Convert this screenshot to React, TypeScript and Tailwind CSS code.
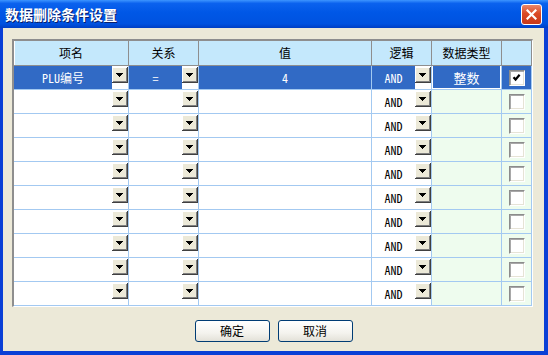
import React from "react";

const headers = ["项名", "关系", "值", "逻辑", "数据类型", ""];

type Row = {
  name: string;
  rel: string;
  val: string;
  logic: string;
  type: string;
  checked: boolean;
  selected: boolean;
};

const rows: Row[] = Array.from({ length: 10 }, (_, i) =>
  i === 0
    ? { name: "PLU编号", rel: "=", val: "4", logic: "AND", type: "整数", checked: true, selected: true }
    : { name: "", rel: "", val: "", logic: "AND", type: "", checked: false, selected: false }
);

const latin = "font-['Noto_Sans_Mono_CJK_SC','Liberation_Mono','Noto_Sans_CJK_SC',monospace]";

function DropButton() {
  return (
    <div className="w-[16px] h-[16px] flex items-center justify-center bg-[#ece9d8] border-r border-b border-[#404040] shadow-[inset_1px_1px_#ffffff,inset_-1px_-1px_#808080]">
      <svg width="7" height="4" viewBox="0 0 7 4">
        <path d="M0 0h7v1h-1v1h-1v1h-1v1h-1v-1h-1v-1h-1v-1h-1z" fill="#000" />
      </svg>
    </div>
  );
}

function ComboCell({ text, selected }: { text: string; selected: boolean }) {
  return (
    <div className="h-[24px] flex border-r border-b border-[#a3c9f1] bg-white">
      <div
        className={`flex-1 flex items-center justify-center text-[12px] ${latin} ${
          selected ? "bg-[#316ac5] text-white" : "text-black"
        }`}
      >
        {text}
      </div>
      <div className="w-[16px] pt-[1px]">
        <DropButton />
      </div>
    </div>
  );
}

function CheckBox({ checked }: { checked: boolean }) {
  return (
    <div className="w-[16px] h-[16px] flex items-center justify-center bg-white border border-t-[#8c8c8c] border-l-[#8c8c8c] border-b-white border-r-white shadow-[inset_1px_1px_#a8a8a8,inset_-1px_-1px_#e6e3d6]">
      {checked && (
        <svg width="9" height="9" viewBox="0 0 9 9">
          <polyline points="1.5,4.2 3.6,6.5 7.6,1.8" fill="none" stroke="#000" strokeWidth="2.2" />
        </svg>
      )}
    </div>
  );
}

export default function App() {
  return (
    <div className="w-[548px] h-[355px] flex flex-col bg-[#0a3fd6] font-['Noto_Sans_CJK_SC',sans-serif] select-none">
      <div className="h-[28px] flex items-center justify-between pl-[5px] pr-[6px] bg-[linear-gradient(to_bottom,#3d95ff_0%,#0b62ee_12%,#0057e6_45%,#0052e0_85%,#003fc4_100%)]">
        <span className="text-white font-bold text-[14px] leading-none [text-shadow:1px_1px_#0a1e6a]">
          数据删除条件设置
        </span>
        <div className="w-[21px] h-[21px] rounded-[3px] border border-white flex items-center justify-center bg-[linear-gradient(to_bottom,#e9876a_0%,#db4a26_45%,#c7381a_100%)]">
          <svg width="11" height="11" viewBox="0 0 11 11">
            <path d="M1.5 1.5L9.5 9.5M9.5 1.5L1.5 9.5" stroke="#fff" strokeWidth="2.2" strokeLinecap="square" />
          </svg>
        </div>
      </div>

      <div className="flex-1 ml-[3px] mr-[4px] mb-[4px] bg-[#ece9d8] pt-[11px] pl-[9px] flex flex-col">
        <div className="w-[521px] border-t-2 border-l-2 border-[#8e8e8e] border-r border-b border-r-white border-b-white">
          <div className="grid grid-cols-[115px_70px_173px_60px_70px_30px]">
            {headers.map((h, i) => (
              <div
                key={i}
                className={`h-[25px] bg-[#c4e8fc] border-r border-b border-[#8e8e8e] flex items-center justify-center text-[12px] text-black ${
                  i === 0 ? "shadow-[inset_1px_0_#ffffff]" : ""
                }`}
              >
                {h}
              </div>
            ))}

            {rows.map((r, i) => (
              <React.Fragment key={i}>
                <ComboCell text={r.name} selected={r.selected} />
                <ComboCell text={r.rel} selected={r.selected} />
                <div
                  className={`h-[24px] border-r border-b border-[#a3c9f1] flex items-center justify-center text-[12px] ${latin} ${
                    r.selected ? "bg-[#316ac5] text-white" : "bg-white"
                  }`}
                >
                  {r.val}
                </div>
                <ComboCell text={r.logic} selected={r.selected} />
                <div
                  className={`h-[24px] border-r border-b border-[#a3c9f1] flex items-center justify-center text-[13px] ${
                    r.selected
                      ? "bg-[#316ac5] text-white shadow-[inset_1px_0_#ffffff,inset_-1px_-1px_#ffffff]"
                      : "bg-[#eefcee]"
                  }`}
                >
                  {r.type}
                </div>
                <div
                  className={`h-[24px] border-r border-b border-[#a3c9f1] flex items-center justify-center ${
                    r.selected ? "bg-[#316ac5]" : "bg-[#eefcee]"
                  }`}
                >
                  <CheckBox checked={r.checked} />
                </div>
              </React.Fragment>
            ))}
          </div>
        </div>

        <div className="mt-[13px] flex justify-center gap-[8px] pr-[9px]">
          {["确定", "取消"].map((t) => (
            <button
              key={t}
              className="w-[75px] h-[22px] rounded-[3px] border border-[#003c74] bg-[linear-gradient(to_bottom,#ffffff_0%,#f4f3ee_60%,#e3e1d8_100%)] text-[12px] text-black flex items-center justify-center leading-none"
            >
              {t}
            </button>
          ))}
        </div>
      </div>
    </div>
  );
}
